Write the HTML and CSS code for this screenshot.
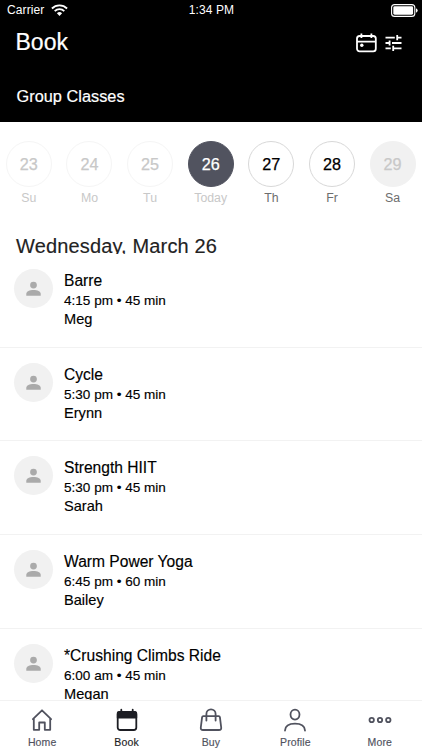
FILE: index.html
```html
<!DOCTYPE html>
<html lang="en">
<head>
<meta charset="utf-8">
<title>Book</title>
<link rel="stylesheet" href="styles.css">
</head>
<body>
<svg class="defs" width="0" height="0" aria-hidden="true">
  <symbol id="person" viewBox="0 0 16 16"><circle cx="8" cy="4.3" r="3.6"/><path d="M.3 15.600v-2c0-2.600 3.500-4 7.700-4s7.700 1.400 7.700 4v2z"/></symbol>
</svg>
<div class="app">
  <header class="header">
    <div class="status">
      <div class="carrier"><span>Carrier</span>
        <svg class="wifi" viewBox="0 0 17 12"><g fill="none" stroke="#fff" stroke-width="1.8"><path d="M.9 4.5a10.8 10.8 0 0 1 15.2 0"/><path d="M3.7 7.2a6.8 6.8 0 0 1 9.6 0"/></g><path fill="#fff" d="M5.9 9.3a3.7 3.7 0 0 1 5.2 0L8.5 12z"/></svg>
      </div>
      <div class="clock">1:34 PM</div>
      <div class="battery"><svg viewBox="0 0 27 13"><rect x=".6" y=".6" width="23.2" height="11.8" rx="3" fill="none" stroke="#fff" stroke-width="1.1"/><rect x="2.3" y="2.3" width="19.8" height="8.4" rx="1.4" fill="#fff"/><path d="M25 4.3q1.7.8 1.7 2.2T25 8.7z" fill="#fff"/></svg></div>
    </div>
    <div class="titlebar">
      <h1>Book</h1>
      <svg class="calendar" viewBox="0 0 21 20"><g fill="none" stroke="#fff" stroke-width="1.8"><rect x="1" y="3" width="18.8" height="15.4" rx="2.6"/><path d="M1 8.6h18.8M5.4.5V5M15.4.5V5"/></g><circle cx="5.8" cy="12.2" r="1.700" fill="#fff"/></svg>
      <svg class="tune" viewBox="0 0 17 18"><path fill="none" stroke="#fff" stroke-width="1.8" d="M.5 3.6h9.3M12.3 3.6h4.2M12.2 1v5.2M.5 9h4.2M4.6 6.4v5.2M7 9h9.5M.5 14.4h5.3M8.3 14.4h8.2M8.2 11.8V17"/></svg>
    </div>
    <h2>Group Classes</h2>
  </header>
  <nav class="days">
    <div class="day past"><b>23</b><span>Su</span></div>
    <div class="day past"><b>24</b><span>Mo</span></div>
    <div class="day past"><b>25</b><span>Tu</span></div>
    <div class="day today"><b>26</b><span>Today</span></div>
    <div class="day"><b>27</b><span>Th</span></div>
    <div class="day"><b>28</b><span>Fr</span></div>
    <div class="day closed"><b>29</b><span>Sa</span></div>
  </nav>
  <h3 class="date">Wednesday, March 26</h3>
  <main class="list">
    <article class="class"><div class="avatar"><svg><use href="#person"/></svg></div><div class="info"><h4>Barre</h4><p class="time">4:15 pm • 45 min</p><p class="coach">Meg</p></div></article>
    <article class="class"><div class="avatar"><svg><use href="#person"/></svg></div><div class="info"><h4>Cycle</h4><p class="time">5:30 pm • 45 min</p><p class="coach">Erynn</p></div></article>
    <article class="class"><div class="avatar"><svg><use href="#person"/></svg></div><div class="info"><h4>Strength HIIT</h4><p class="time">5:30 pm • 45 min</p><p class="coach">Sarah</p></div></article>
    <article class="class"><div class="avatar"><svg><use href="#person"/></svg></div><div class="info"><h4>Warm Power Yoga</h4><p class="time">6:45 pm • 60 min</p><p class="coach">Bailey</p></div></article>
    <article class="class"><div class="avatar"><svg><use href="#person"/></svg></div><div class="info"><h4>*Crushing Climbs Ride</h4><p class="time">6:00 am • 45 min</p><p class="coach">Megan</p></div></article>
  </main>
  <footer class="tabs">
    <a class="tab"><svg viewBox="0 0 24 24"><path d="M2.9 11.200 12 2.300l9.100 8.900M3.800 10.500v11.300h5.400v-7.300h5.600v7.300h5.400V10.500"/></svg><span>Home</span></a>
    <a class="tab active"><svg viewBox="0 0 24 24"><rect x="2.700" y="4" width="18.600" height="18" rx="2.500"/><path fill="currentColor" d="M2.700 9.700V5.500q0-1.700 1.800-1.700h15q1.800 0 1.800 1.700v4.200zM6.300 1.700v3M17.700 1.700v3"/></svg><span>Book</span></a>
    <a class="tab"><svg viewBox="0 0 24 24"><path d="M4.300 8.200h15.400q1 0 1.200 1l1.300 10.300q.3 2.500-2.200 2.500H4q-2.500 0-2.200-2.500L3.100 9.200q.2-1 1.200-1zM7.400 12.500V6a4.600 4.600 0 0 1 9.200 0v6.500"/></svg><span>Buy</span></a>
    <a class="tab"><svg viewBox="0 0 24 24"><ellipse cx="12" cy="6.600" rx="4.500" ry="5"/><path d="M2 22.500c.3-4.500 4-6.800 10-6.800s9.700 2.300 10 6.800"/></svg><span>Profile</span></a>
    <a class="tab"><svg viewBox="0 0 24 24"><circle cx="3.700" cy="12" r="2.200"/><circle cx="12" cy="12" r="2.200"/><circle cx="20.300" cy="12" r="2.200"/></svg><span>More</span></a>
  </footer>
</div>
</body>
</html>
```
FILE: styles.css
```css
* { box-sizing: border-box; }
body { margin: 0; background: #fff; font-family: "Liberation Sans", Arial, sans-serif; color: #000; }
h1, h2, h3, h4, p { margin: 0; font-weight: 400; }
.defs { position: absolute; }
.app { width: 422px; height: 750px; display: flex; flex-direction: column; overflow: hidden; }

.header { flex: none; height: 122px; background: #000; color: #fff; }
.status { height: 20px; padding: 0 4px 0 7px; display: grid; grid-template-columns: 1fr auto 1fr; align-items: center; font-size: 12px; letter-spacing: .1px; }
.clock { padding-right: 2px; }
.carrier { display: flex; align-items: center; gap: 7px; }
.wifi { width: 17px; height: 12px; }
.battery { display: flex; justify-content: flex-end; }
.battery svg { width: 27px; height: 13px; }
.titlebar { height: 46px; display: flex; align-items: center; padding: 0 20px 0 15.500px; }
h1 { flex: 1; font-size: 23px; line-height: 26px; padding-bottom: 2px; -webkit-text-stroke: .2px; }
.calendar { width: 21px; height: 20px; margin-right: 8.500px; }
.tune { width: 17px; height: 18px; }
h2 { font-size: 16.300px; line-height: 20px; padding: 20px 16.500px 0; -webkit-text-stroke: .2px; letter-spacing: .03px; }

.days { flex: none; display: grid; grid-template-columns: repeat(7, 60.630px); margin-left: -1.500px; padding-top: 19px; height: 114px; }
.day { display: flex; flex-direction: column; align-items: center; }
.day b { width: 46px; height: 46px; border: 1px solid #d8d8d8; border-radius: 50%; font-weight: 400; font-size: 16.200px; line-height: 45px; text-align: center; -webkit-text-stroke: .25px; }
.day span { font-size: 12.300px; line-height: 16px; margin-top: 3px; color: #6d6d6d; }
.past b { border-color: #f5f5f5; color: #c8c8c8; }
.past span, .today span { color: #c8c8c8; }
.today b { background: #51535f; border-color: #51535f; color: #fff; }
.closed b { background: #f1f1f1; border-color: #f1f1f1; color: #c8c8c8; }

.date { flex: none; height: 18px; overflow: hidden; padding-left: 16px; font-size: 20px; line-height: 21px; color: #222; letter-spacing: .15px; -webkit-text-stroke: .15px; }
.list { flex: 1; min-height: 0; overflow: hidden; }
.class { height: 93.700px; display: flex; padding: 15px 14px 0; border-bottom: 1px solid #f2f2f2; }
.avatar { width: 39px; height: 39px; border-radius: 50%; background: #f1f1f1; display: flex; align-items: center; justify-content: center; }
.avatar svg { width: 15px; height: 15px; fill: #aaa; }
.info { padding-left: 11px; padding-top: 2px; -webkit-text-stroke: .15px; }
h4 { font-size: 15.600px; line-height: 20px; }
.time { font-size: 13.550px; line-height: 19px; }
.coach { font-size: 14.600px; line-height: 19px; }

.tabs { flex: none; height: 50px; display: grid; grid-template-columns: repeat(5, 1fr); background: #fff; border-top: 1px solid #f2f2f2; }
.tab { display: flex; flex-direction: column; align-items: center; padding-top: 6.500px; color: #50525e; font-size: 10.500px; line-height: 13px; letter-spacing: .15px; -webkit-text-stroke: .15px; }
.tab svg { width: 24px; height: 24px; margin-bottom: 4.500px; fill: none; stroke: currentColor; stroke-width: 1.800; stroke-linejoin: round; stroke-linecap: round; }
.active { color: #1d1e24; }
```
